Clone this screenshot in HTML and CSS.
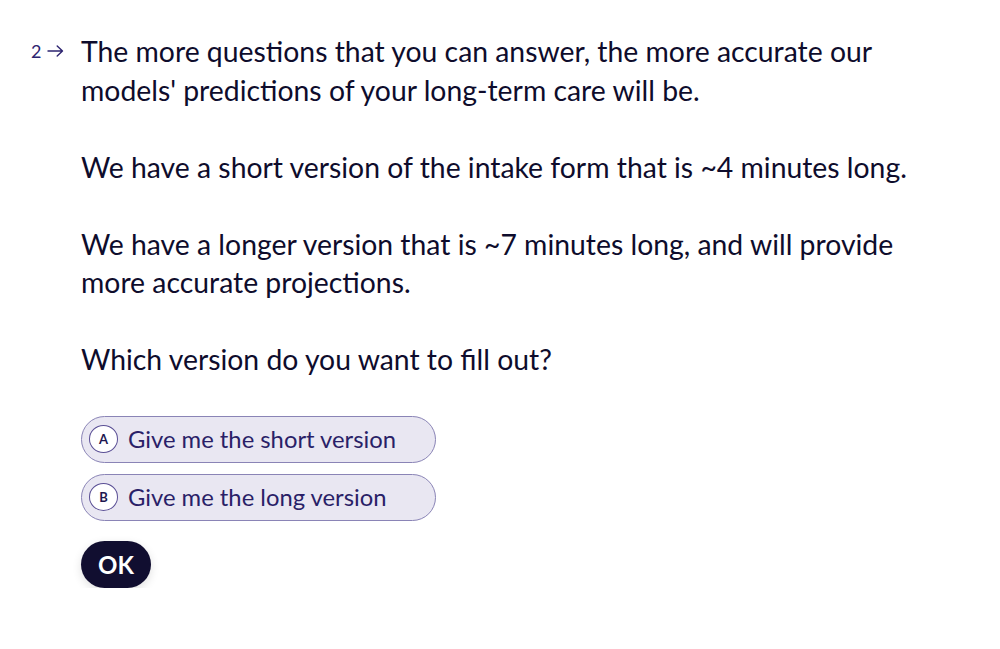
FILE: index.html
```html
<!DOCTYPE html>
<html lang="en">
<head>
<meta charset="utf-8">
<title>Intake</title>
<link rel="stylesheet" href="styles.css">
</head>
<body>
<main class="question">
  <div class="counter"><span class="num">2</span><svg class="arrow" width="17" height="12" viewBox="0 0 17 12"><path d="M1 6h14.5M10.2 1l5.3 5-5.3 5" fill="none" stroke="currentColor" stroke-width="1.4" stroke-linecap="round" stroke-linejoin="round"/></svg></div>
  <div class="content">
    <div class="title">
      <p>The more questions that you can answer, the more accurate our models' predictions of your long-term care will be.</p>
      <p>We have a short version of the intake form that is ~4 minutes long.</p>
      <p>We have a longer version that is ~7 minutes long, and will provide more accurate projections.</p>
      <p>Which version do you want to fill out?</p>
    </div>
    <div class="choices">
      <div class="choice"><span class="key">A</span><span class="label">Give me the short version</span></div>
      <div class="choice"><span class="key">B</span><span class="label">Give me the long version</span></div>
    </div>
    <button class="ok">OK</button>
  </div>
</main>
</body>
</html>
```
FILE: styles.css
```css
html, body {
  margin: 0;
  padding: 0;
  background: #ffffff;
}
body {
  font-family: Lato, "Noto Sans", sans-serif;
  color: #0e0c2c;
}
.question {
  display: flex;
  padding: 32px 0 0 31px;
}
.counter {
  width: 50px;
  display: flex;
  align-items: center;
  gap: 6px;
  height: 38px;
  color: #2d2470;
  font-size: 18px;
}
.num { line-height: 1; }
.arrow { display: block; }
.content {
  width: 840px;
}
.title {
  font-size: 28.35px;
  line-height: 38.5px;
}
.title p {
  margin: 0 0 38.5px 0;
}
.title p:last-child {
  margin-bottom: 0;
}
.choices {
  display: flex;
  flex-direction: column;
  gap: 11px;
  margin-top: 37px;
}
.choice {
  width: 355px;
  height: 47px;
  box-sizing: border-box;
  border: 1px solid #8a84b6;
  border-radius: 24px;
  background: #e9e7f2;
  display: flex;
  align-items: center;
  padding-left: 7px;
  gap: 10px;
}
.key {
  width: 29px;
  height: 28px;
  box-sizing: border-box;
  border: 1px solid #5a4f95;
  border-radius: 50%;
  background: #ffffff;
  display: flex;
  align-items: center;
  justify-content: center;
  font-size: 13px;
  font-weight: 700;
  color: #1e1750;
}
.label {
  font-size: 23.8px;
  color: #2a1f68;
}
.ok {
  margin-top: 20px;
  width: 70px;
  height: 47px;
  border: none;
  border-radius: 24px;
  background: #110e30;
  color: #ffffff;
  font-family: Lato, "Noto Sans", sans-serif;
  font-weight: 700;
  font-size: 24px;
  box-shadow: 0 3px 10px rgba(0, 0, 0, 0.12);
  padding: 0;
}
```
